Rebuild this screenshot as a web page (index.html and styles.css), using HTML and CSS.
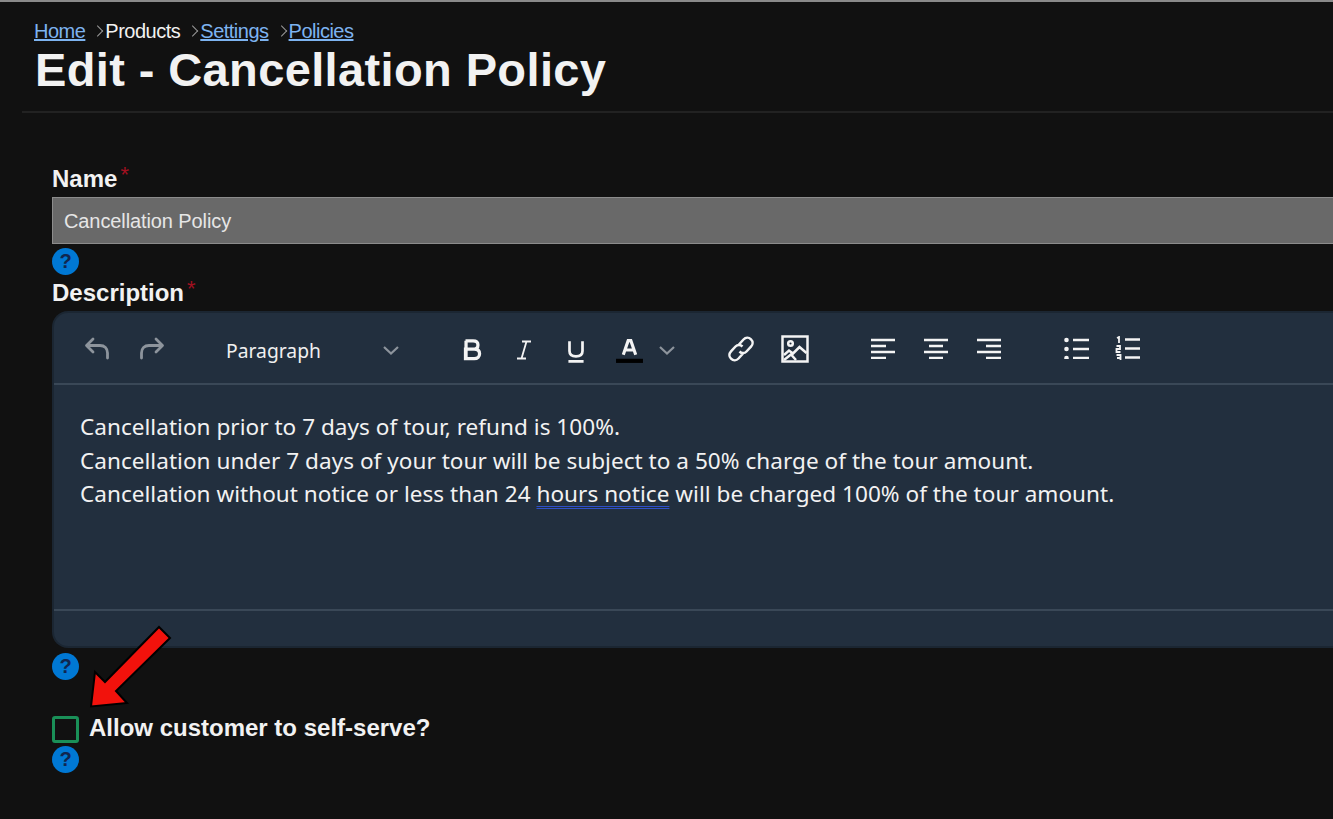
FILE: index.html
```html
<!DOCTYPE html>
<html lang="en">
<head>
<meta charset="utf-8">
<title>Edit - Cancellation Policy</title>
<link rel="stylesheet" href="styles.css">
</head>
<body>
<div class="page">
  <header class="head">
    <nav class="crumbs">
      <a href="#">Home</a><span class="sep"></span><span class="cur">Products</span><span class="sep"></span><a href="#">Settings</a><span class="sep"></span><a href="#">Policies</a>
    </nav>
    <h1 class="title">Edit - Cancellation Policy</h1>
  </header>
  <main class="form">
    <label class="label">Name<span class="req">*</span></label>
    <div class="input">Cancellation Policy</div>
    <div class="help">?</div>
    <label class="label label-desc">Description<span class="req">*</span></label>
    <section class="editor">
      <div class="toolbar">
        <svg class="ic ic-undo" viewBox="0 0 28 28"><path d="M10 5 3.500 11.500 10 18M4 11.500H17C21.500 11.500 24.500 14.500 24.500 19V24"/></svg>
        <svg class="ic ic-redo" viewBox="0 0 28 28"><path d="M18 5 24.500 11.500 18 18M24 11.500H11C6.500 11.500 3.500 14.500 3.500 19V24"/></svg>
        <span class="para">Paragraph</span>
        <svg class="chev chev-para" viewBox="0 0 18 10"><path d="M2 2 9 8.500 16 2"/></svg>
        <svg class="tool tool-b" viewBox="0 0 24 24"><path d="M6 3.500H13C16 3.500 17.500 5 17.500 7.300S16 11.200 13 11.200H6M6 11.200H14C17.200 11.200 19 13 19 15.500S17.200 20 14 20H6ZM6.500 3.500V20"/></svg>
        <svg class="tool tool-i" viewBox="0 0 24 24"><path class="thin" d="M10 3.500H19M5 20.500H14M14.500 3.500 9.500 20.500"/></svg>
        <svg class="tool tool-u" viewBox="0 0 24 24"><path d="M6 3V12C6 15.500 8.500 17 12 17S18 15.500 18 12V3M5 21.500H19"/></svg>
        <svg class="tool tool-a" viewBox="0 0 28 28"><path class="heavy" d="M8 18 12.700 4.500H15.300L20 18M10 13.500H18"/><rect class="fill-black" x="1" y="22" width="26" height="4"/></svg>
        <svg class="chev chev-a" viewBox="0 0 18 10"><path d="M2 2 9 8.500 16 2"/></svg>
        <svg class="tool tool-link" viewBox="0 0 28 28"><path d="M11.500 10 16.500 4.500C18.600 2.300 21.800 2.200 24 4.300S26 9.500 24 11.700L19.500 16.500C17.400 18.700 14.500 18.500 12.500 16.500M16.500 18 11.500 23.500C9.400 25.700 6.200 25.800 4 23.700S2 18.500 4 16.300L8.500 11.500C10.600 9.300 13.500 9.500 15.500 11.500"/></svg>
        <svg class="tool tool-img" viewBox="0 0 28 28"><rect x="1.500" y="1.500" width="25" height="25"/><circle cx="9.500" cy="8.500" r="2.300"/><path d="M3 20 8 15.500 12 18.500 18.500 12 25.500 18M3 25 10 19.500 15 25"/></svg>
        <svg class="tool tool-al1" viewBox="0 0 26 22"><path d="M1 3H25M1 9H16M1 15H25M1 21H16"/></svg>
        <svg class="tool tool-al2" viewBox="0 0 26 22"><path d="M1 3H25M6 9H20M1 15H25M6 21H20"/></svg>
        <svg class="tool tool-al3" viewBox="0 0 26 22"><path d="M1 3H25M10 9H25M1 15H25M10 21H25"/></svg>
        <svg class="tool tool-ul" viewBox="0 0 26 22"><path d="M9 3H25M9 12H25M9 21H25"/><circle class="fill-white" cx="2.500" cy="3" r="2.300"/><circle class="fill-white" cx="2.500" cy="12" r="2.300"/><circle class="fill-white" cx="2.500" cy="21" r="2.300"/></svg>
        <svg class="tool tool-ol" viewBox="0 0 26 24"><path d="M10 3.500H25M10 12.500H25M10 21.500H25"/><path class="thin" d="M2 2 4 1V7M1.500 10H5V13H1.500V16H5.500M1.500 19H5.500V22H2M5.500 22V25H1.500"/></svg>
      </div>
      <div class="content">
        <p>Cancellation prior to 7 days of tour, refund is 100%.</p>
        <p>Cancellation under 7 days of your tour will be subject to a 50% charge of the tour amount.</p>
        <p>Cancellation without notice or less than 24 <span class="spell">hours notice</span> will be charged 100% of the tour amount.</p>
      </div>
      <div class="statusbar"></div>
    </section>
    <div class="help help-desc">?</div>
    <div class="check-row">
      <span class="check"></span>
      <span class="check-label">Allow customer to self-serve?</span>
    </div>
    <div class="help help-check">?</div>
  </main>
  <svg class="arrow" viewBox="0 0 100 100" width="100" height="100"><polygon points="11,88.500 15,54 25,64 79,9 90,20 36,73 47,85"/></svg>
</div>
</body>
</html>
```
FILE: styles.css
```css
* { box-sizing: border-box; }
html, body { margin: 0; height: 100%; }
body { background: #111111; color: #f2f2f2; font-family: "Liberation Sans", Arial, sans-serif; overflow: hidden; }
.page { position: relative; width: 1333px; height: 819px; overflow: hidden; border-top: 2px solid #8a8a8a; }
.head { margin-left: 22px; padding: 17px 0 13px 12px; border-bottom: 2px solid #222222; height: 111px; }
.crumbs { display: flex; align-items: center; font-size: 20px; line-height: 24px; letter-spacing: -0.5px; }
.crumbs a { color: #7db3f0; text-decoration: underline; }
.cur { color: #f2f2f2; }
.sep { display: inline-block; width: 8px; height: 8px; margin: 0 2px 0 10px; border-top: 1.500px solid #999; border-right: 1.500px solid #999; transform: rotate(45deg) translate(-1px, 1px); }
.title { margin: 2px 0 0 1px; font-size: 47px; line-height: 50px; font-weight: 700; letter-spacing: 0.38px; color: #f2f2f2; }
.form { padding: 51px 0 0 52px; width: 1500px; }
.label { display: block; font-family: "Liberation Sans", sans-serif; font-weight: 700; font-size: 24px; line-height: 30px; color: #f2f2f2; }
.req { color: #a11020; font-weight: 400; font-size: 22px; margin-left: 3px; vertical-align: 5px; line-height: 0; }
.input { height: 47px; margin-top: 3px; padding: 0 11px; background: #696969; border: 1px solid #8c8c8c; font-family: "Liberation Sans", sans-serif; font-size: 20px; line-height: 47px; letter-spacing: -0.1px; color: #e6e6e6; }
.help { width: 27px; height: 27px; border-radius: 50%; background: #0078d4; color: #10264f; font-family: "Liberation Sans", sans-serif; font-weight: 700; font-size: 20px; line-height: 27px; text-align: center; margin-top: 4px; }
.label-desc { margin-top: 3px; }
.editor { margin-top: 3px; height: 337px; background: #222f3e; border: 2px solid #1b2632; border-right: 0; border-radius: 16px 0 0 16px; display: flex; flex-direction: column; }
.toolbar { position: relative; height: 72px; flex: none; border-bottom: 2px solid #3a4857; }
.toolbar svg { position: absolute; fill: none; stroke: #f4f4f4; stroke-width: 2.500; }
.ic { width: 28px; height: 28px; top: 21px; stroke: #8d949c !important; stroke-width: 2.800 !important; stroke-linecap: round; stroke-linejoin: round; }
.ic-undo { left: 29px; }
.ic-redo { left: 84px; }
.para { position: absolute; left: 172px; top: 25px; font-family: "Noto Sans", sans-serif; font-size: 19.300px; line-height: 26px; color: #f0f0f0; }
.chev { width: 18px; height: 10px; stroke: #8d949c !important; stroke-width: 2.200 !important; }
.chev-para { left: 328px; top: 32px; }
.chev-a { left: 604px; top: 32px; }
.tool-b { left: 405px; top: 24px; width: 26px; height: 26px; stroke-width: 3 !important; }
.tool-i { left: 458px; top: 25px; width: 24px; height: 24px; }
.toolbar .thin { stroke-width: 1.800; }
.toolbar .heavy { stroke-width: 3; }
.tool-u { left: 509px; top: 25px; width: 26px; height: 26px; }
.tool-a { left: 561px; top: 23px; width: 29px; height: 29px; }
.fill-black { fill: #000; stroke: none; }
.fill-white { fill: #f4f4f4; stroke: none; }
.tool-link { left: 673px; top: 22px; width: 28px; height: 28px; }
.tool-img { left: 727px; top: 22px; width: 28px; height: 28px; }
.tool-al1 { left: 816px; top: 24px; width: 26px; height: 22px; }
.tool-al2 { left: 869px; top: 24px; width: 26px; height: 22px; }
.tool-al3 { left: 922px; top: 24px; width: 26px; height: 22px; }
.tool-ul { left: 1010px; top: 24px; width: 26px; height: 22px; }
.tool-ol { left: 1061px; top: 23px; width: 26px; height: 24px; }
.content { flex: 1; padding: 25px 26px 0; font-family: "Noto Sans", sans-serif; font-size: 22.560px; line-height: 33.600px; letter-spacing: 0.03px; color: #f2f2f2; }
.content p { margin: 0; }
.spell { text-decoration: underline double #2f50c8 1px; text-underline-offset: 4px; }
.statusbar { height: 37px; flex: none; border-top: 2px solid #3a4857; }
.help-desc { margin-top: 5px; }
.check-row { display: flex; align-items: flex-start; margin-top: 34px; height: 32px; }
.check { width: 27px; height: 27px; margin-top: 2px; border: 3px solid #1a9058; border-radius: 3px; flex: none; }
.check-label { margin-left: 10px; font-family: "Liberation Sans", sans-serif; font-weight: 700; font-size: 24px; line-height: 28px; }
.help-check { margin-top: 0; }
.arrow { position: absolute; left: 80px; top: 616px; overflow: visible; }
.arrow polygon { fill: #f2120c; stroke: #000; stroke-width: 2; }
```
